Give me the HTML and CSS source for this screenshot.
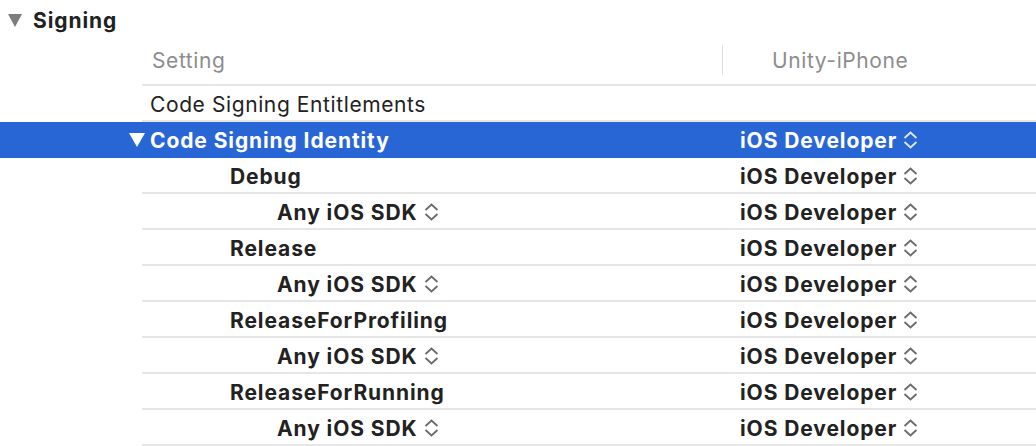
FILE: index.html
```html
<!doctype html>
<html lang="en">
  <head>
    <meta charset="UTF-8" />
    <meta name="viewport" content="width=device-width, initial-scale=1.0" />
    <title>Build Settings - Signing</title>
    <link rel="stylesheet" href="styles.css">
  </head>
  <body>
    <div class="section-title">
      <span class="disclosure"></span>
      <span>Signing</span>
    </div>

    <div class="settings">
      <div class="row head">
        <div class="cells">
          <div class="name">Setting</div>
          <div class="value">Unity-iPhone</div>
        </div>
      </div>

      <div class="row">
        <div class="cells">
          <div class="name plain">Code Signing Entitlements</div>
          <div class="value"></div>
        </div>
      </div>

      <div class="row selected">
        <div class="cells">
          <div class="name"><span class="open-tri"></span>Code Signing Identity</div>
          <div class="value">iOS Developer <svg class="popup" viewBox="0 0 15 20"><path d="M1.5 8 7.5 2.5 13.5 8M1.5 12 7.5 17.5 13.5 12"/></svg></div>
        </div>
      </div>

      <div class="row">
        <div class="cells">
          <div class="name lvl1">Debug</div>
          <div class="value">iOS Developer <svg class="popup" viewBox="0 0 15 20"><path d="M1.5 8 7.5 2.5 13.5 8M1.5 12 7.5 17.5 13.5 12"/></svg></div>
        </div>
      </div>
      <div class="row">
        <div class="cells">
          <div class="name lvl2">Any iOS SDK <svg class="popup" viewBox="0 0 15 20"><path d="M1.5 8 7.5 2.5 13.5 8M1.5 12 7.5 17.5 13.5 12"/></svg></div>
          <div class="value">iOS Developer <svg class="popup" viewBox="0 0 15 20"><path d="M1.5 8 7.5 2.5 13.5 8M1.5 12 7.5 17.5 13.5 12"/></svg></div>
        </div>
      </div>

      <div class="row">
        <div class="cells">
          <div class="name lvl1">Release</div>
          <div class="value">iOS Developer <svg class="popup" viewBox="0 0 15 20"><path d="M1.5 8 7.5 2.5 13.5 8M1.5 12 7.5 17.5 13.5 12"/></svg></div>
        </div>
      </div>
      <div class="row">
        <div class="cells">
          <div class="name lvl2">Any iOS SDK <svg class="popup" viewBox="0 0 15 20"><path d="M1.5 8 7.5 2.5 13.5 8M1.5 12 7.5 17.5 13.5 12"/></svg></div>
          <div class="value">iOS Developer <svg class="popup" viewBox="0 0 15 20"><path d="M1.5 8 7.5 2.5 13.5 8M1.5 12 7.5 17.5 13.5 12"/></svg></div>
        </div>
      </div>

      <div class="row">
        <div class="cells">
          <div class="name lvl1">ReleaseForProfiling</div>
          <div class="value">iOS Developer <svg class="popup" viewBox="0 0 15 20"><path d="M1.5 8 7.5 2.5 13.5 8M1.5 12 7.5 17.5 13.5 12"/></svg></div>
        </div>
      </div>
      <div class="row">
        <div class="cells">
          <div class="name lvl2">Any iOS SDK <svg class="popup" viewBox="0 0 15 20"><path d="M1.5 8 7.5 2.5 13.5 8M1.5 12 7.5 17.5 13.5 12"/></svg></div>
          <div class="value">iOS Developer <svg class="popup" viewBox="0 0 15 20"><path d="M1.5 8 7.5 2.5 13.5 8M1.5 12 7.5 17.5 13.5 12"/></svg></div>
        </div>
      </div>

      <div class="row">
        <div class="cells">
          <div class="name lvl1">ReleaseForRunning</div>
          <div class="value">iOS Developer <svg class="popup" viewBox="0 0 15 20"><path d="M1.5 8 7.5 2.5 13.5 8M1.5 12 7.5 17.5 13.5 12"/></svg></div>
        </div>
      </div>
      <div class="row">
        <div class="cells">
          <div class="name lvl2">Any iOS SDK <svg class="popup" viewBox="0 0 15 20"><path d="M1.5 8 7.5 2.5 13.5 8M1.5 12 7.5 17.5 13.5 12"/></svg></div>
          <div class="value">iOS Developer <svg class="popup" viewBox="0 0 15 20"><path d="M1.5 8 7.5 2.5 13.5 8M1.5 12 7.5 17.5 13.5 12"/></svg></div>
        </div>
      </div>
    </div>
  </body>
</html>
```

FILE: styles.css
```css
body {
  margin: 0;
  font-family: Inter, "Liberation Sans", sans-serif;
  font-size: 21px;
  letter-spacing: 0.6px;
  color: #222;
  background: white;
  overflow: hidden;
}
.section-title {
  display: flex;
  align-items: center;
  height: 40px;
  padding-left: 8px;
  font-weight: 700;
  letter-spacing: 0.9px;
  color: #222;
}
.disclosure {
  width: 0;
  height: 0;
  border-left: 7px solid transparent;
  border-right: 7px solid transparent;
  border-top: 13px solid #7d7d7d;
  margin-right: 11px;
  margin-top: 1px;
}
.row {
  height: 36px;
}
.row.head {
  height: 46px;
}
.cells {
  display: grid;
  grid-template-columns: 580px 1fr;
  height: 100%;
  margin-left: 142px;
  box-sizing: border-box;
  border-bottom: 2px solid #e6e6e6;
}
.name,
.value {
  display: flex;
  align-items: center;
  padding-top: 2px;
  font-weight: 700;
  letter-spacing: 0.9px;
}
.name {
  padding-left: 8px;
}
.value {
  padding-left: 18px;
}
.name.plain {
  font-weight: 400;
  letter-spacing: 0.6px;
}
.name.lvl1 {
  padding-left: 88px;
}
.name.lvl2 {
  padding-left: 135px;
}
.head .name,
.head .value {
  padding-top: 0;
  padding-bottom: 4px;
  font-weight: 400;
  letter-spacing: 0.6px;
  color: #8d8d8d;
}
.head .name {
  padding-left: 10px;
}
.head .value {
  padding-left: 50px;
  position: relative;
}
.head .value::before {
  content: "";
  position: absolute;
  left: 0;
  top: 5px;
  height: 30px;
  border-left: 1px solid #dedede;
}
.row.selected {
  background: #2866d6;
  color: white;
}
.row.selected .cells {
  border-bottom-color: #2866d6;
}
.open-tri {
  width: 0;
  height: 0;
  border-left: 8px solid transparent;
  border-right: 8px solid transparent;
  border-top: 14px solid white;
  margin-left: -21px;
  margin-right: 5px;
}
.popup {
  flex-shrink: 0;
  width: 15px;
  height: 20px;
  margin-left: 6px;
  fill: none;
  stroke: #6b6b6b;
  stroke-width: 1.8;
}
.selected .popup {
  stroke: #dfe8fa;
}
```
